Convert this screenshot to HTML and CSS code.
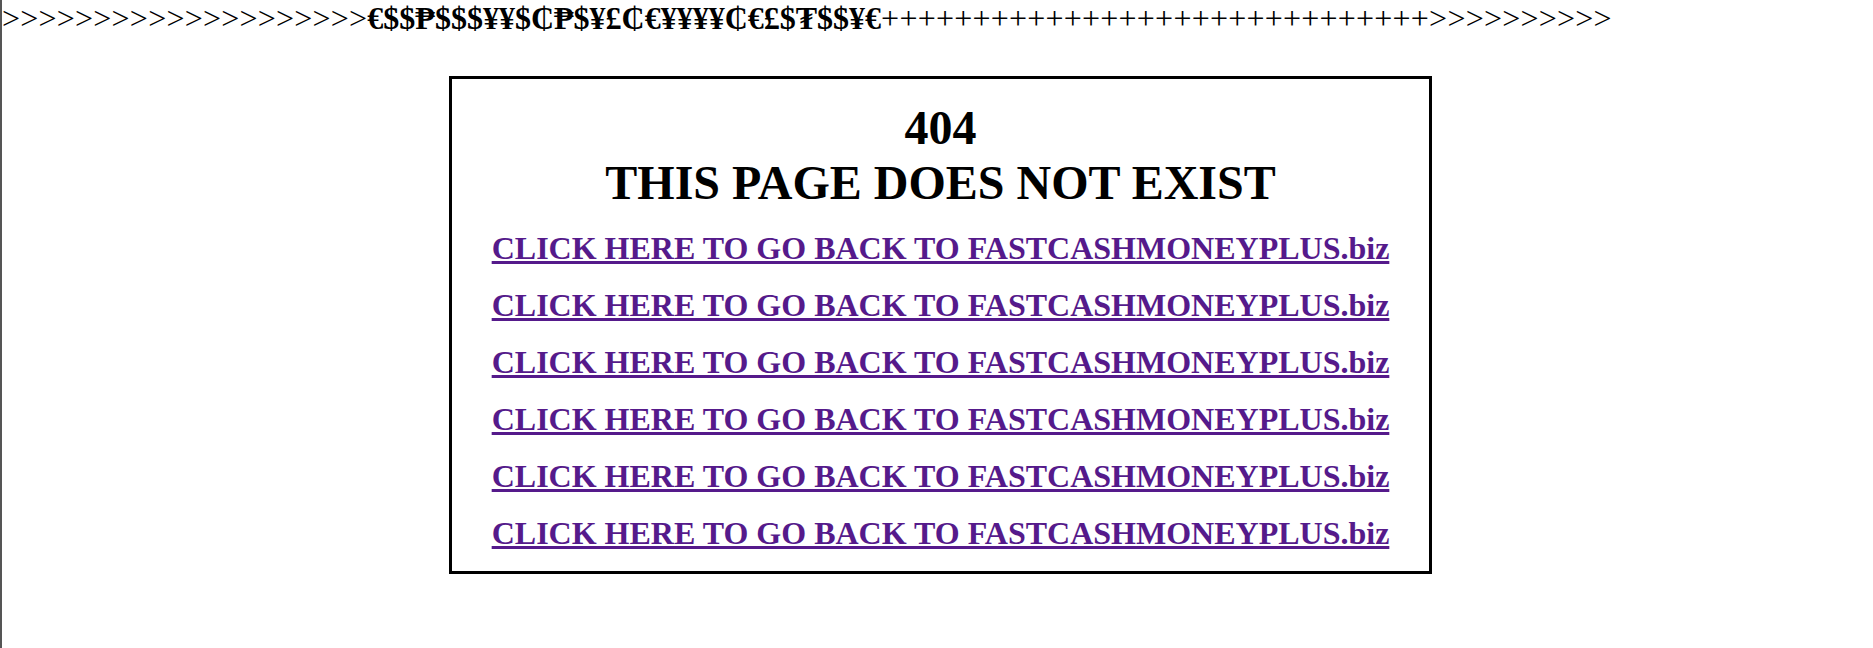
FILE: index.html
```html
<!DOCTYPE html>
<html>
<head>
<meta charset="utf-8">
<title>404</title>
<link rel="stylesheet" href="styles.css">
</head>
<body>
<div class="ticker">&gt;&gt;&gt;&gt;&gt;&gt;&gt;&gt;&gt;&gt;&gt;&gt;&gt;&gt;&gt;&gt;&gt;&gt;&gt;&gt;<b class="money">€$$₱$$$¥¥$₵₱$¥£₵€¥¥¥¥₵€£$₮$$¥€</b>++++++++++++++++++++++++++++++&gt;&gt;&gt;&gt;&gt;&gt;&gt;&gt;&gt;&gt;</div>
<div class="wrap">
  <div class="box">
    <h1 class="title"><span class="big">404<br>THIS PAGE DOES NOT EXIST</span></h1>
    <h1 class="back"><a href="#">CLICK HERE TO GO BACK TO FASTCASHMONEYPLUS.biz</a></h1>
    <h1 class="back"><a href="#">CLICK HERE TO GO BACK TO FASTCASHMONEYPLUS.biz</a></h1>
    <h1 class="back"><a href="#">CLICK HERE TO GO BACK TO FASTCASHMONEYPLUS.biz</a></h1>
    <h1 class="back"><a href="#">CLICK HERE TO GO BACK TO FASTCASHMONEYPLUS.biz</a></h1>
    <h1 class="back"><a href="#">CLICK HERE TO GO BACK TO FASTCASHMONEYPLUS.biz</a></h1>
    <h1 class="back"><a href="#">CLICK HERE TO GO BACK TO FASTCASHMONEYPLUS.biz</a></h1>
  </div>
</div>
</body>
</html>
```
FILE: styles.css
```css
html, body {
  height: 100%;
}
body {
  margin: 0;
  box-sizing: border-box;
  border-left: 2px solid #555;
  background: #fff;
  color: #000;
  font-family: "Liberation Serif", "Times New Roman", serif;
  overflow: hidden;
}
.ticker {
  font-size: 32px;
  white-space: nowrap;
  font-weight: normal;
  letter-spacing: 0.22px;
}
.money {
  font-weight: bold;
  letter-spacing: 0;
}
.wrap {
  display: flex;
  justify-content: center;
  padding-left: 6px;
  margin-top: 39px;
}
.box {
  border: 3px solid #000;
  padding: 0 40px;
  text-align: center;
}
.title,
.back {
  font-size: 32px;
  font-weight: bold;
  margin: 20px 0;
}
.title {
  margin-top: 21.44px;
}
.back:last-child {
  margin-bottom: 19px;
}
.big {
  font-size: 48px;
}
.back a {
  color: #551a8b;
  text-decoration: underline;
}
```
